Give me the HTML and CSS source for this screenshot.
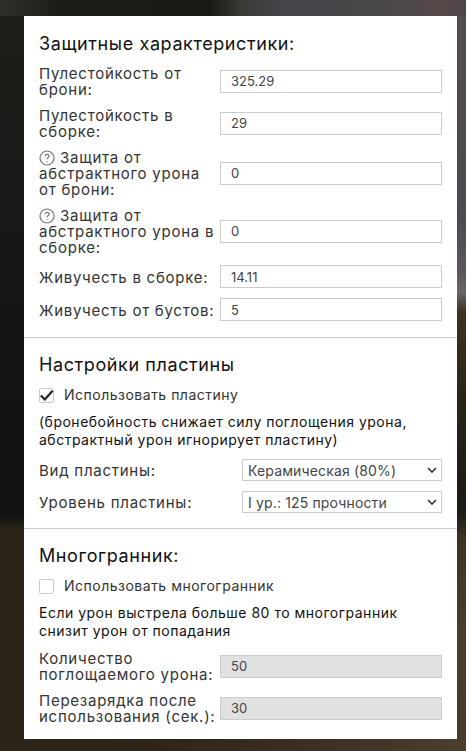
FILE: index.html
```html
<!DOCTYPE html>
<html lang="ru">
<head>
    <meta charset="UTF-8">
    <meta name="viewport" content="width=device-width, initial-scale=1.0">
    <title>Настройки брони</title>
    <link rel="stylesheet" href="styles.css">
</head>
<body>
    <div class="panel">
        <section class="block block-first">
            <h2>Защитные характеристики:</h2>

            <div class="row">
                <label class="row-label">Пулестойкость от брони:</label>
                <input class="field" type="text" value="325.29">
            </div>
            <div class="row">
                <label class="row-label">Пулестойкость в сборке:</label>
                <input class="field" type="text" value="29">
            </div>
            <div class="row">
                <label class="row-label">
                    <svg class="help" viewBox="0 0 16 16"><circle cx="8" cy="8" r="7" /><path d="M6 6.3a2 2 0 0 1 4 0c0 1.4-2 1.5-2 3" /><path d="M8 11.2v1" /></svg>
                    Защита от абстрактного урона от брони:
                </label>
                <input class="field" type="text" value="0">
            </div>
            <div class="row">
                <label class="row-label">
                    <svg class="help" viewBox="0 0 16 16"><circle cx="8" cy="8" r="7" /><path d="M6 6.3a2 2 0 0 1 4 0c0 1.4-2 1.5-2 3" /><path d="M8 11.2v1" /></svg>
                    Защита от абстрактного урона в сборке:
                </label>
                <input class="field" type="text" value="0">
            </div>
            <div class="row">
                <label class="row-label">Живучесть в сборке:</label>
                <input class="field" type="text" value="14.11">
            </div>
            <div class="row">
                <label class="row-label">Живучесть от бустов:</label>
                <input class="field" type="text" value="5">
            </div>
        </section>

        <section class="block">
            <h2>Настройки пластины</h2>
            <label class="check">
                <span class="box"><svg class="tick" viewBox="0 0 16 16"><path d="M2 8l4.2 4.2L14.5 3" /></svg></span>
                <span>Использовать пластину</span>
            </label>
            <p class="note">(бронебойность снижает силу поглощения урона, абстрактный урон игнорирует пластину)</p>
            <div class="row">
                <label class="row-label">Вид пластины:</label>
                <div class="select-box">
                    <span>Керамическая (80%)</span>
                    <svg class="chevron" viewBox="0 0 10 6"><path d="M1 1l4 4 4-4" /></svg>
                </div>
            </div>
            <div class="row">
                <label class="row-label">Уровень пластины:</label>
                <div class="select-box">
                    <span>I ур.: 125 прочности</span>
                    <svg class="chevron" viewBox="0 0 10 6"><path d="M1 1l4 4 4-4" /></svg>
                </div>
            </div>
        </section>

        <section class="block block-last">
            <h2>Многогранник:</h2>
            <label class="check">
                <span class="box"></span>
                <span>Использовать многогранник</span>
            </label>
            <p class="note">Если урон выстрела больше 80 то многогранник снизит урон от попадания</p>
            <div class="row">
                <label class="row-label">Количество поглощаемого урона:</label>
                <input class="field" type="text" value="50" disabled>
            </div>
            <div class="row">
                <label class="row-label">Перезарядка после использования (сек.):</label>
                <input class="field" type="text" value="30" disabled>
            </div>
        </section>
    </div>
</body>
</html>
```

FILE: styles.css
```css
* {
    box-sizing: border-box;
}
body {
    margin: 0;
    height: 751px;
    overflow: hidden;
    padding: 16px 9px 12px 24px;
    font-family: 'Inter', 'DejaVu Sans', sans-serif;
    color: #222;
    background-color: #161613;
    background-repeat: no-repeat;
    /* blurred photo behind the panel: top strip, bottom strip, right strip, left strip */
    background-image:
        linear-gradient(to right, #2f2f2a 0, #1c1c18 60px, #181814 210px, #3a3a34 240px, #45444a 280px, #484648 380px, #57494a 440px, #4d4648 466px),
        linear-gradient(to right, #2c2419 0, #2e2519 150px, #3a2f20 300px, #4a3f2f 466px),
        linear-gradient(to bottom, #544c4c 0, #4b4a4e 200px, #5a555a 270px, #6a6468 292px, #3a3322 312px, #2a2418 400px, #1c1a15 510px, #3c3324 540px, #4a3f2f 640px, #463b2b 751px),
        linear-gradient(to bottom, #1e1f1b 0, #171815 250px, #111113 480px, #121213 515px, #2a2318 530px, #2b2419 751px);
    background-size: 100% 16px, 100% 12px, 9px 100%, 24px 100%;
    background-position: left top, left bottom, right top, left top;
}
.panel {
    background: #fff;
    height: 723px;
}
.block {
    padding: 14px 15px 15px;
    border-bottom: 1px solid #ccc;
}
.block-first {
    padding-top: 15px;
    padding-bottom: 16px;
}
.block-last {
    border-bottom: none;
}
h2 {
    margin: 0 0 8px;
    font-size: 18px;
    line-height: 26px;
    font-weight: 400;
    letter-spacing: 0.6px;
    color: #111;
}
.row {
    display: flex;
    align-items: center;
    justify-content: space-between;
    margin-bottom: 10px;
}
.row:last-child {
    margin-bottom: 0;
}
.row-label {
    flex: 1;
    padding-top: 1px;
    margin-bottom: -1px;
    font-size: 15px;
    line-height: 16px;
    letter-spacing: 0.75px;
    color: #333;
}
.help {
    width: 16px;
    height: 16px;
    vertical-align: -3px;
    fill: none;
    stroke: #777;
    stroke-width: 1.2;
}
.field {
    width: 222px;
    height: 23px;
    flex: none;
    padding: 0 10px;
    border: 1px solid #ccc;
    background: #fff;
    font: inherit;
    font-size: 13px;
    color: #444;
    border-radius: 0;
    outline: none;
}
.field:disabled {
    background: #e1e1e1;
    color: #444;
}
.check {
    display: flex;
    align-items: center;
    gap: 10px;
    font-size: 14px;
    line-height: 18px;
    letter-spacing: 0.5px;
    color: #333;
    margin-bottom: 9px;
}
.box {
    width: 15px;
    height: 15px;
    flex: none;
    border: 1px solid #ccc;
    border-radius: 2px;
    background: #fff;
    position: relative;
}
.tick {
    position: absolute;
    top: -1px;
    left: -1px;
    width: 15px;
    height: 15px;
    fill: none;
    stroke: #222;
    stroke-width: 2.4;
}
.note {
    margin: 0 0 10px;
    font-size: 14px;
    line-height: 18px;
    letter-spacing: 0.5px;
    color: #111;
}
.select-box {
    width: 200px;
    height: 22px;
    flex: none;
    display: flex;
    align-items: center;
    justify-content: space-between;
    padding: 0 4px 0 5px;
    border: 1px solid #ccc;
    font-size: 14px;
    letter-spacing: 0.15px;
    color: #444;
}
.chevron {
    width: 10px;
    height: 6px;
    fill: none;
    stroke: #333;
    stroke-width: 1.6;
}
```
